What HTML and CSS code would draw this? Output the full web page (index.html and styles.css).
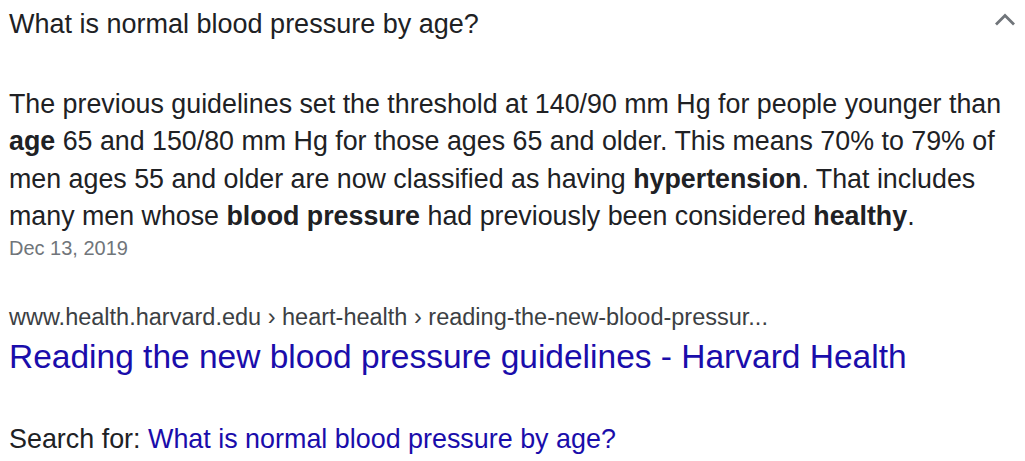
FILE: index.html
```html
<!DOCTYPE html>
<html lang="en">
<head>
    <meta charset="UTF-8">
    <title>What is normal blood pressure by age?</title>
    <link rel="stylesheet" href="styles.css">
</head>
<body>
    <div class="card">
        <div class="question">
            <span>What is normal blood pressure by age?</span>
            <svg class="chevron" width="24" height="24" viewBox="0 0 24 24">
                <path d="M3 16.5 L12 7.5 L21 16.5" fill="none" stroke="#70757a" stroke-width="2.8"/>
            </svg>
        </div>

        <div class="answer">
            <p class="snippet">The previous guidelines set the threshold at 140/90 mm Hg for people younger than <b>age</b> 65 and 150/80 mm Hg for those ages 65 and older. This means 70% to 79% of men ages 55 and older are now classified as having <b>hypertension</b>. That includes many men whose <b>blood pressure</b> had previously been considered <b>healthy</b>.</p>
            <div class="date">Dec 13, 2019</div>
        </div>

        <div class="result">
            <div class="crumbs">www.health.harvard.edu › heart-health › reading-the-new-blood-pressur...</div>
            <a class="title" href="#">Reading the new blood pressure guidelines - Harvard Health</a>
        </div>

        <div class="search-for">
            Search for: <a href="#">What is normal blood pressure by age?</a>
        </div>
    </div>
</body>
</html>
```

FILE: styles.css
```css
body {
    margin: 0;
    background-color: #fff;
    font-family: "Liberation Sans", Arial, sans-serif;
    color: #202124;
}
.card {
    padding: 0 8px 0 9px;
}
.question {
    display: flex;
    justify-content: space-between;
    align-items: center;
    height: 48px;
    font-size: 27px;
}
.chevron {
    margin-top: -9px;
}
.answer {
    margin-top: 38px;
}
.snippet {
    margin: 0;
    font-size: 26.8px;
    line-height: 37.3px;
}
.snippet b {
    font-weight: bold;
}
.date {
    font-size: 20px;
    line-height: 23px;
    color: #70757a;
    margin-top: 2px;
}
.result {
    margin-top: 44px;
}
.crumbs {
    font-size: 23.5px;
    line-height: 27px;
    color: #3c4043;
}
.title {
    display: block;
    font-size: 33.5px;
    line-height: 38px;
    color: #1a0dab;
    text-decoration: none;
    margin-top: 7px;
}
.search-for {
    margin-top: 48px;
    font-size: 26.9px;
    line-height: 30px;
}
.search-for a {
    color: #1a0dab;
    text-decoration: none;
}
```
